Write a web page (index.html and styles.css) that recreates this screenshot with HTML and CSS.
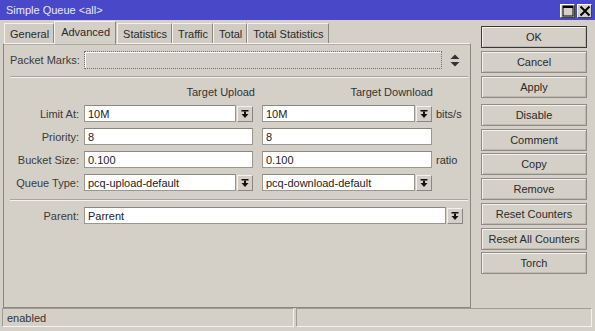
FILE: index.html
```html
<!DOCTYPE html>
<html>
<head>
<meta charset="utf-8">
<link rel="stylesheet" href="styles.css">
</head>
<body>
<div class="window">
  <div class="titlebar">
    <span class="title">Simple Queue &lt;all&gt;</span>
    <div class="tb-btns">
      <span class="tb-btn"><svg width="12" height="12" viewBox="0 0 12 12"><rect x="1" y="1" width="10" height="10" fill="none" stroke="#000" stroke-width="1"/><rect x="1" y="1" width="10" height="2" fill="#000"/></svg></span>
      <span class="tb-btn"><svg width="12" height="12" viewBox="0 0 12 12"><path d="M1.5 1.5 L10.5 10.5 M10.5 1.5 L1.5 10.5" stroke="#000" stroke-width="2"/></svg></span>
    </div>
  </div>
  <div class="main">
    <div class="left">
      <div class="tabs">
        <div class="tab">General</div>
        <div class="tab active">Advanced</div>
        <div class="tab">Statistics</div>
        <div class="tab">Traffic</div>
        <div class="tab">Total</div>
        <div class="tab">Total Statistics</div>
      </div>
      <div class="panel">
        <div class="pm-row">
          <span class="lbl">Packet Marks:</span>
          <div class="pm-field"></div>
          <svg class="updown" width="10" height="13" viewBox="0 0 10 13"><path d="M0.5 5 L5 0.5 L9.5 5 Z" fill="#333"/><path d="M0.5 8 L9.5 8 L5 12.5 Z" fill="#333"/></svg>
        </div>
        <div class="sep"></div>
        <div class="grid">
          <span></span><span class="hdr">Target Upload</span><span class="hdr">Target Download</span><span></span>

          <span class="lbl">Limit At:</span>
          <div class="combo"><div class="input">10M</div><div class="dd"><svg width="10" height="10" viewBox="0 0 10 10"><rect x="1.5" y="1" width="7" height="1.5" fill="#111"/><rect x="4" y="2.5" width="2" height="2.5" fill="#111"/><path d="M1.5 5 H8.5 L5 9 Z" fill="#111"/></svg></div></div>
          <div class="combo"><div class="input">10M</div><div class="dd"><svg width="10" height="10" viewBox="0 0 10 10"><rect x="1.5" y="1" width="7" height="1.5" fill="#111"/><rect x="4" y="2.5" width="2" height="2.5" fill="#111"/><path d="M1.5 5 H8.5 L5 9 Z" fill="#111"/></svg></div></div>
          <span class="unit">bits/s</span>

          <span class="lbl">Priority:</span>
          <div class="input">8</div>
          <div class="input">8</div>
          <span></span>

          <span class="lbl">Bucket Size:</span>
          <div class="input">0.100</div>
          <div class="input">0.100</div>
          <span class="unit">ratio</span>

          <span class="lbl">Queue Type:</span>
          <div class="combo"><div class="input">pcq-upload-default</div><div class="dd"><svg width="10" height="10" viewBox="0 0 10 10"><rect x="1.5" y="1" width="7" height="1.5" fill="#111"/><rect x="4" y="2.5" width="2" height="2.5" fill="#111"/><path d="M1.5 5 H8.5 L5 9 Z" fill="#111"/></svg></div></div>
          <div class="combo"><div class="input">pcq-download-default</div><div class="dd"><svg width="10" height="10" viewBox="0 0 10 10"><rect x="1.5" y="1" width="7" height="1.5" fill="#111"/><rect x="4" y="2.5" width="2" height="2.5" fill="#111"/><path d="M1.5 5 H8.5 L5 9 Z" fill="#111"/></svg></div></div>
          <span></span>
        </div>
        <div class="sep sep2"></div>
        <div class="parent-row">
          <span class="lbl">Parent:</span>
          <div class="combo parent"><div class="input">Parrent</div><div class="dd"><svg width="10" height="10" viewBox="0 0 10 10"><rect x="1.5" y="1" width="7" height="1.5" fill="#111"/><rect x="4" y="2.5" width="2" height="2.5" fill="#111"/><path d="M1.5 5 H8.5 L5 9 Z" fill="#111"/></svg></div></div>
        </div>
      </div>
    </div>
    <div class="buttons">
      <div class="btn default">OK</div>
      <div class="btn">Cancel</div>
      <div class="btn">Apply</div>
      <div class="btn group">Disable</div>
      <div class="btn">Comment</div>
      <div class="btn">Copy</div>
      <div class="btn">Remove</div>
      <div class="btn">Reset Counters</div>
      <div class="btn">Reset All Counters</div>
      <div class="btn">Torch</div>
    </div>
  </div>
  <div class="status">
    <div class="cell first">enabled</div>
    <div class="cell second"></div>
  </div>
</div>
</body>
</html>
```

FILE: styles.css
```css
* { box-sizing: border-box; }
html, body { margin: 0; padding: 0; }
body {
  width: 595px;
  height: 331px;
  overflow: hidden;
  background: #d4d0c8;
  font-family: "Liberation Sans", Arial, sans-serif;
  font-size: 11px;
  color: #333;
}
.window {
  width: 595px;
  height: 331px;
  display: flex;
  flex-direction: column;
}
.titlebar {
  height: 20px;
  background: #4848c8;
  display: flex;
  align-items: center;
  justify-content: space-between;
  padding: 0 3px 0 6px;
}
.title {
  color: #e8e8f8;
  font-size: 11px;
}
.tb-btns {
  display: flex;
  gap: 2px;
  margin-top: 1px;
}
.tb-btn {
  width: 15px;
  height: 14px;
  background: #d4d0c8;
  border: 1px solid #fff;
  border-right-color: #404040;
  border-bottom-color: #404040;
  display: flex;
  align-items: center;
  justify-content: center;
}
.main {
  height: 288px;
  display: flex;
  padding-left: 3px;
}
.left {
  width: 468px;
  display: flex;
  flex-direction: column;
}
.tabs {
  height: 23px;
  display: flex;
  align-items: flex-end;
  padding-left: 1px;
}
.tab {
  height: 20px;
  padding: 0 4px 0 5px;
  display: flex;
  align-items: center;
  border: 1px solid #f4f2ee;
  border-bottom: none;
  border-right-color: #8a8780;
  color: #2a2a2a;
  white-space: nowrap;
  background: #d0ccc4;
}
.tab.active {
  height: 23px;
  margin-bottom: -1px;
  position: relative;
  z-index: 1;
  background: #d4d0c8;
  padding: 0 5px 3px 6px;
  margin-right: 1px;
}
.panel {
  flex: 1;
  border: 1px solid #f4f2ee;
  border-left-color: #8a8780;
  border-right-color: #8a8780;
  border-bottom-color: #8a8780;
  box-shadow: inset 0 1px 0 #b0ada6;
  padding: 7px 0 0 6px;
}
.lbl {
  color: #3a3a3a;
  text-align: right;
  white-space: nowrap;
}
.pm-row {
  height: 18px;
  display: flex;
  align-items: center;
}
.pm-row .lbl { width: 68px; }
.pm-field {
  width: 358px;
  height: 18px;
  margin-left: 6px;
  border: 1px dotted #707070;
  box-shadow: inset 1px 1px 0 #fff;
}
.updown { margin-left: 8px; }
.sep {
  height: 2px;
  margin-top: 7px;
  margin-right: 2px;
  border-top: 1px solid #a8a49c;
  border-bottom: 1px solid #f4f2ee;
}
.grid {
  display: grid;
  grid-template-columns: 69px 169px 174px auto;
  grid-template-rows: 15px 17px 17px 17px 17px;
  column-gap: 5px;
  row-gap: 6px;
  margin-top: 6px;
  align-items: center;
}
.grid > :nth-child(3), .grid > :nth-child(7), .grid > :nth-child(11), .grid > :nth-child(15), .grid > :nth-child(19) {
  margin-left: 4px;
}
.grid .hdr {
  text-align: right;
  color: #333;
}
.grid > :nth-child(2) { margin-right: -2px; }
.grid > :nth-child(3) { margin-right: -1px; }
.unit { margin-left: -1px; color: #333; }
.input {
  height: 17px;
  background: #fff;
  border: 1px solid #9a9790;
  border-top-color: #8a8780;
  padding-left: 3px;
  display: flex;
  align-items: center;
  color: #222;
  white-space: nowrap;
  overflow: hidden;
}
.combo {
  display: flex;
  align-items: center;
  gap: 1px;
  height: 17px;
}
.combo .input { flex: 1; }
.dd {
  width: 16px;
  height: 16px;
  flex: none;
  background: #d4d0c8;
  border: 1px solid #f4f2ee;
  border-right-color: #8a8780;
  border-bottom-color: #8a8780;
  display: flex;
  align-items: center;
  justify-content: center;
}
.sep2 { margin-top: 8px; }
.parent-row {
  display: flex;
  align-items: center;
  margin-top: 6px;
  height: 17px;
}
.parent-row .lbl { width: 69px; }
.parent-row .parent {
  width: 379px;
  margin-left: 5px;
}
.buttons {
  margin-left: 10px;
  padding-top: 6px;
  width: 106px;
  display: flex;
  flex-direction: column;
  gap: 2.75px;
}
.btn {
  height: 22px;
  border: 1px solid #8f8c86;
  box-shadow: inset 1px 1px 0 #f4f2ee, inset -1px -1px 0 #bdb9b1;
  display: flex;
  align-items: center;
  justify-content: center;
  color: #2a2a2a;
  white-space: nowrap;
}
.btn.default {
  border-color: #3a3a3a;
}
.btn.group { margin-top: 3.5px; }
.status {
  height: 19px;
  display: flex;
  gap: 2px;
  padding-left: 2px;
}
.cell {
  height: 19px;
  border: 1px solid #a09c94;
  border-right-color: #f4f2ee;
  border-bottom-color: #f4f2ee;
  display: flex;
  align-items: center;
  padding-left: 4px;
  color: #333;
}
.cell.first { width: 292px; }
.cell.second { width: 296px; }
```
